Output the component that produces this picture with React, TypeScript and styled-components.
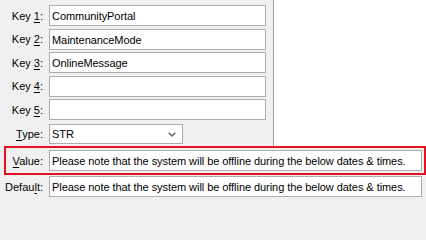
import React from "react";
import styled, { createGlobalStyle } from "styled-components";

const GlobalStyle = createGlobalStyle`
  html, body { margin: 0; padding: 0; background: #f0f0f0; }
  * { box-sizing: border-box; }
`;

const Window = styled.div`
  width: 426px;
  height: 202px;
  background: #f0f0f0;
  font-family: "Liberation Sans", Arial, sans-serif;
  font-size: 11px;
  color: #000;
  overflow: hidden;
  display: flex;
  flex-direction: column;
`;

const Top = styled.div`
  display: flex;
  height: 146px;
`;

const KeyPanel = styled.div`
  width: 274px;
  border-right: 1px solid #a0a0a0;
  padding-top: 5px;
  display: flex;
  flex-direction: column;
  gap: 2.5px;
`;

const Blank = styled.div`
  flex: 1;
  background: #ffffff;
`;

const FieldRow = styled.div<{ $label: number; $field: number; $top?: number }>`
  display: grid;
  grid-template-columns: ${(p) => p.$label}px ${(p) => p.$field}px;
  column-gap: 5px;
  align-items: center;
  margin-top: ${(p) => p.$top ?? 0}px;
`;

const Label = styled.label`
  text-align: right;
  white-space: nowrap;
  line-height: 13px;
  padding-top: 1px;
  padding-right: 1px;
  u {
    text-decoration: underline;
    text-underline-offset: 2px;
    text-decoration-thickness: 1px;
  }
`;

const TextBox = styled.input`
  display: block;
  width: 100%;
  height: 21px;
  margin: 0;
  padding: 1px 2px 0;
  border: 1px solid #adadad;
  background: #ffffff;
  font: inherit;
  letter-spacing: -0.06px;
  color: #000;
  outline: none;
`;

const Combo = styled.div`
  width: 134px;
  height: 20px;
  border: 1px solid #adadad;
  background: #ffffff;
  display: flex;
  align-items: center;
  justify-content: space-between;
  padding: 1px 6px 0 2px;
`;

const Highlight = styled.div`
  margin-left: 4px;
  width: 422px;
  border: 2px solid #e81123;
  padding: 2px 1px 2px 0;
`;

const Chevron = () => (
  <svg width="8" height="5" viewBox="0 0 8 5" style={{ marginTop: 1 }}>
    <path d="M0.7 0.7 L4 4 L7.3 0.7" fill="none" stroke="#606060" strokeWidth="1.4" />
  </svg>
);

const keys = ["CommunityPortal", "MaintenanceMode", "OnlineMessage", "", ""];
const message =
  "Please note that the system will be offline during the below dates & times.";

export default function App() {
  return (
    <>
      <GlobalStyle />
      <Window>
        <Top>
          <KeyPanel>
            {keys.map((k, i) => (
              <FieldRow key={i} $label={44} $field={217}>
                <Label>
                  Key <u>{i + 1}</u>:
                </Label>
                <TextBox readOnly value={k} />
              </FieldRow>
            ))}
            <FieldRow $label={44} $field={134} $top={1}>
              <Label>
                <u>T</u>ype:
              </Label>
              <Combo>
                <span>STR</span>
                <Chevron />
              </Combo>
            </FieldRow>
          </KeyPanel>
          <Blank />
        </Top>
        <Highlight>
          <FieldRow $label={38} $field={373}>
            <Label>
              <u>V</u>alue:
            </Label>
            <TextBox readOnly value={message} />
          </FieldRow>
        </Highlight>
        <FieldRow $label={44} $field={373} $top={1}>
          <Label>
            Defau<u>l</u>t:
          </Label>
          <TextBox readOnly value={message} />
        </FieldRow>
      </Window>
    </>
  );
}
